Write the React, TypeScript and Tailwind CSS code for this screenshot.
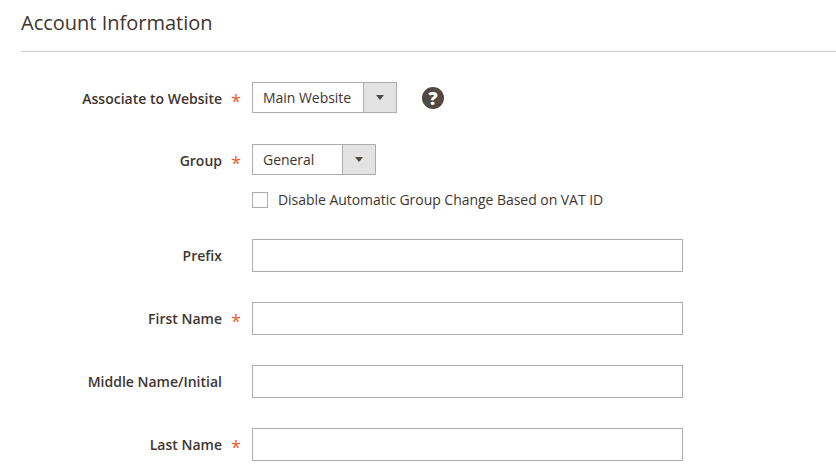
function Star() {
  return <span className="absolute left-[231px] top-[10px] text-[#f0602a] text-[18px] leading-[18px] font-normal">*</span>;
}

function Label({ text, required }: { text: string; required?: boolean }) {
  return (
    <div className="relative w-[252px] shrink-0 self-stretch flex items-center justify-end pr-[30px] text-[14px] font-semibold text-[#41362f]">
      {text}
      {required && <Star />}
    </div>
  );
}

function Select({ text, width }: { text: string; width: string }) {
  return (
    <div className={`flex h-[31px] border border-[#adadad] bg-white ${width}`}>
      <div className="flex-1 pl-[10px] flex items-center text-[14px] tracking-[-0.04px] text-[#41362f]">{text}</div>
      <div className="w-[33px] bg-[#e3e3e3] border-l border-[#adadad] flex items-center justify-center">
        <svg width="8" height="5" viewBox="0 0 8 5"><path d="M0 0H8L4 5Z" fill="#514943" /></svg>
      </div>
    </div>
  );
}

function TextRow({ label, required, mt }: { label: string; required?: boolean; mt: string }) {
  return (
    <div className={`flex ${mt}`}>
      <Label text={label} required={required} />
      <input className="w-[431px] h-[33px] border border-[#adadad] bg-white outline-none" />
    </div>
  );
}

export default function App() {
  return (
    <div className="w-[836px] h-[471px] overflow-hidden bg-white font-['Open_Sans',sans-serif]">
      <div className="ml-[21px] h-[52px] border-b border-[#cccccc] pt-[9px]">
        <h2 className="text-[20px] leading-[28px] font-normal text-[#41362f]">Account Information</h2>
      </div>
      <div className="flex items-start h-[32px] mt-[30px]">
        <Label text="Associate to Website" required />
        <Select text="Main Website" width="w-[145px]" />
        <svg className="ml-[25px] mt-[5px]" width="22" height="22" viewBox="0 0 22 22">
          <circle cx="11" cy="11" r="11" fill="#514943" />
          <text x="11" y="17.5" textAnchor="middle" fontSize="18" fontWeight="800" fill="#ffffff" fontFamily="Open Sans, sans-serif">?</text>
        </svg>
      </div>
      <div className="flex items-start h-[32px] mt-[30px]">
        <Label text="Group" required />
        <Select text="General" width="w-[124px]" />
      </div>
      <div className="flex items-center ml-[252px] mt-[15px] h-[17px]">
        <div className="w-[16px] h-[16px] border border-[#adadad] bg-white" />
        <span className="ml-[10px] text-[14px] tracking-[-0.04px] text-[#41362f]">Disable Automatic Group Change Based on VAT ID</span>
      </div>
      <TextRow label="Prefix" mt="mt-[31px]" />
      <TextRow label="First Name" required mt="mt-[30px]" />
      <TextRow label="Middle Name/Initial" mt="mt-[30px]" />
      <TextRow label="Last Name" required mt="mt-[30px]" />
    </div>
  );
}
